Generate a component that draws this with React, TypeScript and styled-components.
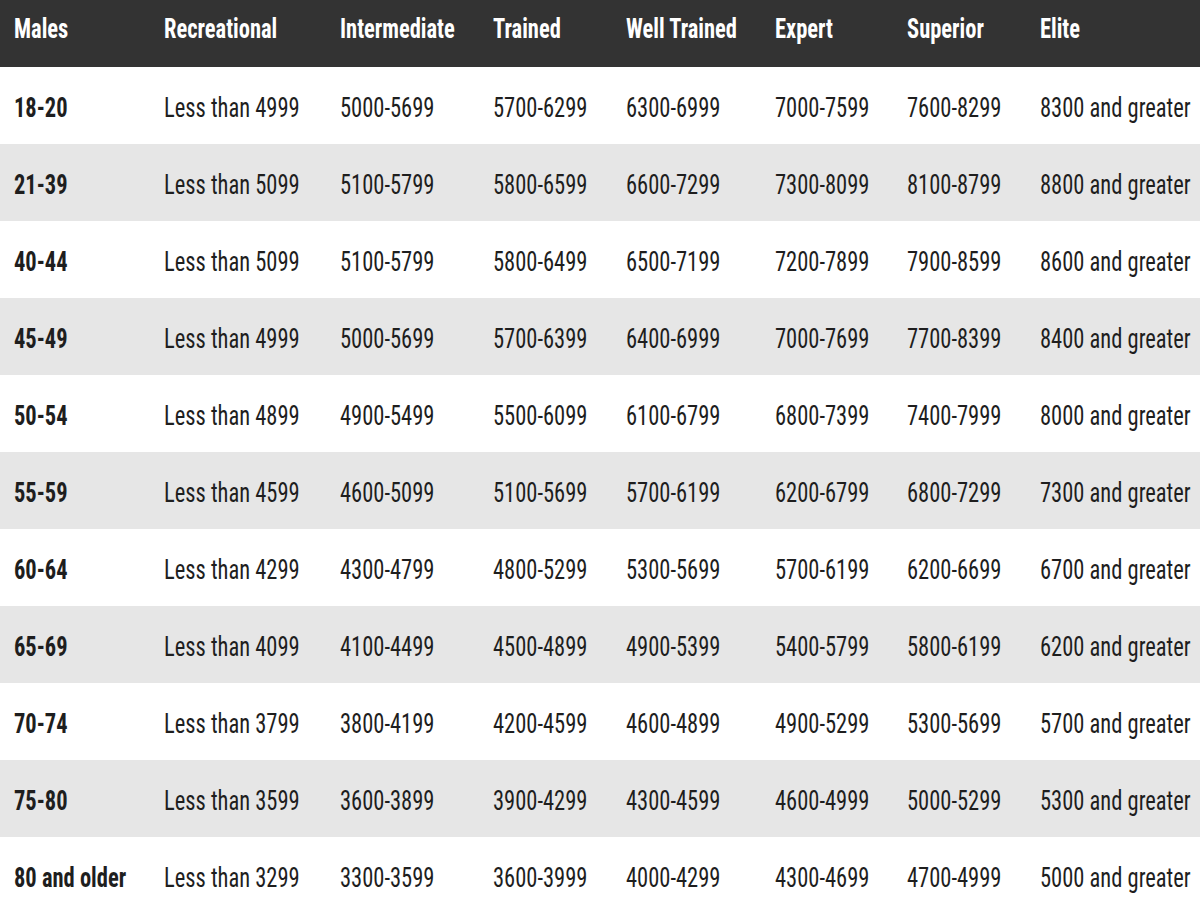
import styled, { createGlobalStyle } from 'styled-components'

const GlobalStyle = createGlobalStyle`
	html, body {
		margin: 0;
		padding: 0;
		background: #fff;
	}
	body {
		font-family: 'Roboto Condensed', Roboto, 'Liberation Sans', sans-serif;
	}
`

const headers = [
	'Males',
	'Recreational',
	'Intermediate',
	'Trained',
	'Well Trained',
	'Expert',
	'Superior',
	'Elite',
]

const widths = [150, 176, 153, 133, 149, 132, 133, 174]

const rows: string[][] = [
	['18-20', 'Less than 4999', '5000-5699', '5700-6299', '6300-6999', '7000-7599', '7600-8299', '8300 and greater'],
	['21-39', 'Less than 5099', '5100-5799', '5800-6599', '6600-7299', '7300-8099', '8100-8799', '8800 and greater'],
	['40-44', 'Less than 5099', '5100-5799', '5800-6499', '6500-7199', '7200-7899', '7900-8599', '8600 and greater'],
	['45-49', 'Less than 4999', '5000-5699', '5700-6399', '6400-6999', '7000-7699', '7700-8399', '8400 and greater'],
	['50-54', 'Less than 4899', '4900-5499', '5500-6099', '6100-6799', '6800-7399', '7400-7999', '8000 and greater'],
	['55-59', 'Less than 4599', '4600-5099', '5100-5699', '5700-6199', '6200-6799', '6800-7299', '7300 and greater'],
	['60-64', 'Less than 4299', '4300-4799', '4800-5299', '5300-5699', '5700-6199', '6200-6699', '6700 and greater'],
	['65-69', 'Less than 4099', '4100-4499', '4500-4899', '4900-5399', '5400-5799', '5800-6199', '6200 and greater'],
	['70-74', 'Less than 3799', '3800-4199', '4200-4599', '4600-4899', '4900-5299', '5300-5699', '5700 and greater'],
	['75-80', 'Less than 3599', '3600-3899', '3900-4299', '4300-4599', '4600-4999', '5000-5299', '5300 and greater'],
	['80 and older', 'Less than 3299', '3300-3599', '3600-3999', '4000-4299', '4300-4699', '4700-4999', '5000 and greater'],
]

function App() {
	return (
		<>
			<GlobalStyle />
			<Table>
				<colgroup>
					{widths.map((w, i) => (
						<col key={i} style={{ width: w }} />
					))}
				</colgroup>
				<thead>
					<HeadRow>
						{headers.map((h) => (
							<HeadCell key={h}>
								<Squeeze>{h}</Squeeze>
							</HeadCell>
						))}
					</HeadRow>
				</thead>
				<tbody>
					{rows.map((r, i) => (
						<BodyRow key={r[0]} $alt={i % 2 === 1}>
							{r.map((c, j) => (
								<Cell key={j} $label={j === 0}>
									<Squeeze>{c}</Squeeze>
								</Cell>
							))}
						</BodyRow>
					))}
				</tbody>
			</Table>
		</>
	)
}

const Table = styled.table`
	width: 1200px;
	table-layout: fixed;
	border-collapse: collapse;
	border-spacing: 0;
`

// the source type is narrower than Roboto Condensed, so squeeze it a little
const Squeeze = styled.span`
	display: inline-block;
	transform: scaleX(0.833);
	transform-origin: left center;
	white-space: nowrap;
`

const HeadRow = styled.tr`
	height: 67px;
	background: #333333;
`

const HeadCell = styled.th`
	padding: 0 0 10px 14px;
	text-align: left;
	vertical-align: middle;
	color: #fff;
	font-size: 27px;
	font-weight: 700;
	white-space: nowrap;
`

const BodyRow = styled.tr<{ $alt: boolean }>`
	height: 77px;
	background: ${(p) => (p.$alt ? '#e6e6e6' : '#ffffff')};
`

const Cell = styled.td<{ $label: boolean }>`
	padding: 4px 0 0 14px;
	vertical-align: middle;
	color: #1e1e1e;
	font-size: 27px;
	font-weight: ${(p) => (p.$label ? 700 : 400)};
	white-space: nowrap;
`

export default App
